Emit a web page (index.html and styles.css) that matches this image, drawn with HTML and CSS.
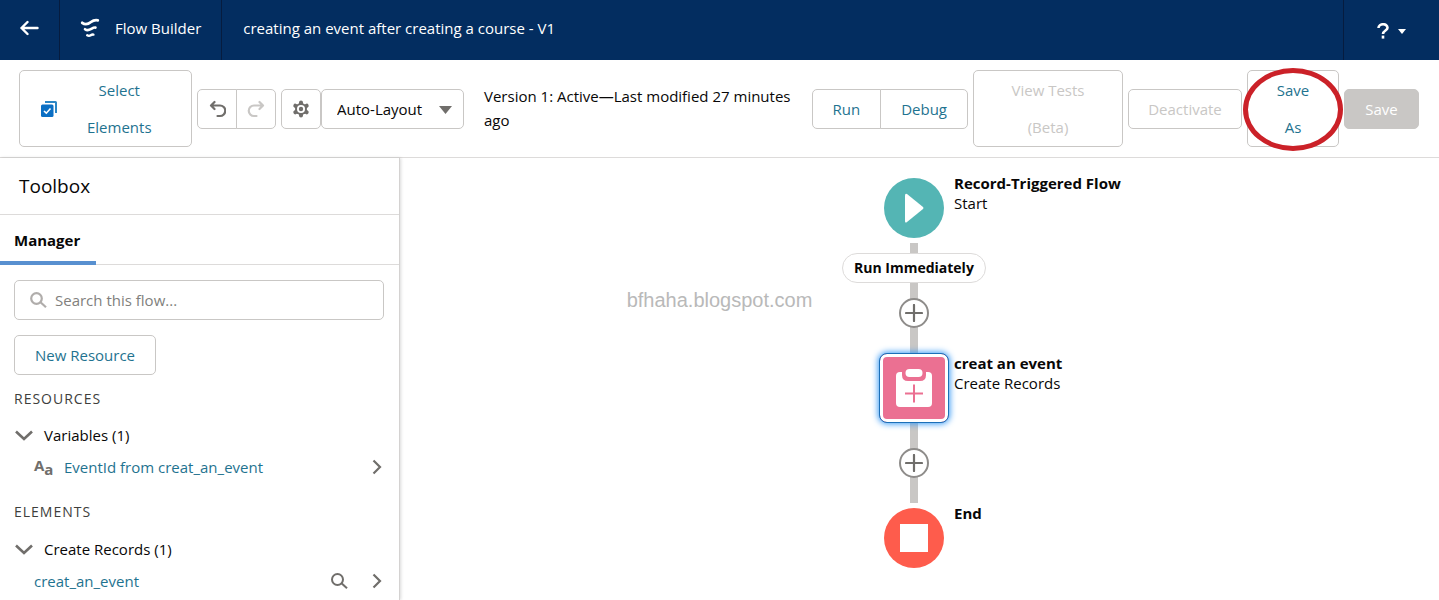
FILE: index.html
```html
<!DOCTYPE html>
<html lang="en">
<head>
<meta charset="utf-8">
<meta name="viewport" content="width=device-width, initial-scale=1">
<title>Flow Builder</title>
<link rel="stylesheet" href="styles.css">
</head>
<body>
<div class="app">
  <header class="topbar">
    <a class="topbar-back" href="#" aria-label="Back">
      <svg width="20" height="16" viewBox="0 0 20 16" fill="none" stroke="#fff" stroke-width="2.400" stroke-linecap="round" stroke-linejoin="round"><path d="M17.500 8h-16M7.500 2l-6 6 6 6"/></svg>
    </a>
    <div class="topbar-brand">
      <svg width="20" height="20" viewBox="0 0 20 20" fill="none" stroke="#fff" stroke-linecap="round"><path stroke-width="2.800" d="M2.200 4.800C5 7 8.500 6 11 4S15 1.800 17.800 2.300"/><path stroke-width="2.600" d="M5 11.200c2 1.500 4 1 5.800 0S13.500 9.300 15.500 9.600"/><path stroke-width="2.400" d="M7.200 17.300c1.400.9 2.600.6 3.500 0s1.500-1 2.700-.7"/></svg>
      <span>Flow Builder</span>
    </div>
    <h1 class="topbar-title">creating an event after creating a course - V1</h1>
    <button class="topbar-help" aria-label="Help">
      <svg width="12" height="16" viewBox="0 0 12 16" fill="none" stroke="#fff" stroke-width="2.600"><path d="M1.500 5C1.500 0 10.500 0 10.500 4.800 10.500 7.500 6 7.500 6 11"/><path d="M6 12.600v3"/></svg>
      <svg width="8" height="5" viewBox="0 0 8 5" fill="#fff"><path d="M0 0h8L4 5z"/></svg>
    </button>
  </header>

  <div class="toolbar">
    <button class="btn btn-select">
      <svg width="16" height="16" viewBox="0 0 16 16"><path d="M4 0h10.500Q16 0 16 1.500V12h-2V2H4z" fill="#2b86c5"/><rect y="3.500" width="12.500" height="12.500" rx="1.500" fill="#0b6fc4"/><path d="m3 10 2.300 2.200L9.500 7.500" fill="none" stroke="#fff" stroke-width="1.600"/></svg>
      <span>Select<br>Elements</span>
    </button>
    <div class="btn-group">
      <button class="btn btn-icon" aria-label="Undo">
        <svg width="18" height="18" viewBox="0 0 18 18" fill="none" stroke="#706e6b" stroke-width="2.200" stroke-linecap="round" stroke-linejoin="round"><path d="M6.500 2 3 5.500 6.500 9M3.500 5.500H12a5 5 0 0 1 0 10.500H9.500"/></svg>
      </button>
      <button class="btn btn-icon" aria-label="Redo" disabled>
        <svg width="18" height="18" viewBox="0 0 18 18" fill="none" stroke="#c9c7c5" stroke-width="2.200" stroke-linecap="round" stroke-linejoin="round"><path d="M12.500 2 16 5.500 12.500 9M15.500 5.500H7a5 5 0 0 0 0 10.500h2.500"/></svg>
      </button>
    </div>
    <div class="mode">
      <button class="btn btn-icon" aria-label="Settings">
        <svg width="18" height="18" viewBox="0 0 18 18"><g stroke="#706e6b" stroke-width="4" stroke-linecap="round"><path d="M9 2.500v13M3.300 5.700l11.400 6.600M14.700 5.700 3.300 12.300"/></g><circle cx="9" cy="9" r="6" fill="#706e6b"/><circle cx="9" cy="9" r="4" fill="#fff"/><circle cx="9" cy="9" r="2.200" fill="#706e6b"/></svg>
      </button>
      <div class="select-wrap">
        <select class="select" aria-label="Layout mode"><option>Auto-Layout</option><option>Freeform</option></select>
        <svg class="select-arrow" width="13" height="8" viewBox="0 0 13 8" fill="#706e6b"><path d="M0 0h13L6.500 8z"/></svg>
      </div>
    </div>
    <p class="version">Version 1: Active—Last modified 27 minutes ago</p>
    <div class="btn-group">
      <button class="btn">Run</button>
      <button class="btn">Debug</button>
    </div>
    <button class="btn btn-tests" disabled>View Tests<br>(Beta)</button>
    <button class="btn btn-deactivate" disabled>Deactivate</button>
    <div class="marked">
      <button class="btn btn-save-as">Save<br>As</button>
      <span class="marker"></span>
    </div>
    <button class="btn btn-save" disabled>Save</button>
  </div>

  <div class="workspace">
    <aside class="sidebar">
      <h2 class="sidebar-title">Toolbox</h2>
      <div class="tabs" role="tablist"><button class="tab" role="tab" aria-selected="true">Manager</button></div>
      <div class="panel">
        <label class="search">
          <svg width="17" height="16" viewBox="0 0 17 16" fill="none" stroke="#b0adab" stroke-width="2.200"><circle cx="6.500" cy="6.500" r="5.300"/><path d="m10.500 10.200 5.500 5"/></svg>
          <input type="search" placeholder="Search this flow..." aria-label="Search this flow">
        </label>
        <button class="btn btn-resource">New Resource</button>

        <h3 class="section">RESOURCES</h3>
        <button class="group">
          <svg width="18" height="11" viewBox="0 0 18 11" fill="none" stroke="#706e6b" stroke-width="2.600"><path d="m1 1.500 8 7.500 8-7.500"/></svg>
          Variables (1)
        </button>
        <div class="item">
          <span class="type-icon" aria-hidden="true"><b>A</b><b class="type-small">a</b></span>
          <a class="item-link" href="#">EventId from creat_an_event</a>
          <svg class="chev" width="10" height="16" viewBox="0 0 10 16" fill="none" stroke="#706e6b" stroke-width="2.200"><path d="m1.500 1.500 6.500 6.500-6.500 6.500"/></svg>
        </div>

        <h3 class="section section-elements">ELEMENTS</h3>
        <button class="group">
          <svg width="18" height="11" viewBox="0 0 18 11" fill="none" stroke="#706e6b" stroke-width="2.600"><path d="m1 1.500 8 7.500 8-7.500"/></svg>
          Create Records (1)
        </button>
        <div class="item">
          <a class="item-link" href="#">creat_an_event</a>
          <svg width="17" height="16" viewBox="0 0 17 16" fill="none" stroke="#706e6b" stroke-width="2"><circle cx="6.500" cy="6.500" r="5.500"/><path d="m10.500 10.200 5.500 5"/></svg>
          <svg class="chev" width="10" height="16" viewBox="0 0 10 16" fill="none" stroke="#706e6b" stroke-width="2.200"><path d="m1.500 1.500 6.500 6.500-6.500 6.500"/></svg>
        </div>
      </div>
    </aside>

    <main class="canvas">
      <div class="connector connector-top"></div>
      <div class="connector connector-bottom"></div>
      <div class="node node-start">
        <svg width="60" height="60" viewBox="0 0 60 60"><circle cx="30" cy="30" r="30" fill="#54b5b4"/><path d="M21 17.500v25.500q0 2.500 2 1L39 31q1-1 0-2L23 16q-2-1-2 1.500z" fill="#fff"/></svg>
        <div class="node-label"><strong>Record-Triggered Flow</strong><span>Start</span></div>
      </div>
      <div class="path-label">Run Immediately</div>
      <button class="add add-first" aria-label="Add element"><svg width="18" height="18" viewBox="0 0 18 18" stroke="#706e6b" stroke-width="2.200" stroke-linecap="round"><path d="M9 1v16M1 9h16"/></svg></button>
      <div class="node node-create">
        <div class="tile"><svg width="36" height="38" viewBox="0 0 36 38"><rect y="3" width="36" height="35" rx="4" fill="#fff"/><path d="M6 2v4q0 6 6 6h12q6 0 6-6V2z" fill="#eb7092"/><rect x="9.500" width="17" height="8" rx="4" fill="#fff"/><path d="M18 15.500v18M9 24.500h18" stroke="#eb7092" stroke-width="2"/></svg></div>
        <div class="node-label"><strong>creat an event</strong><span>Create Records</span></div>
      </div>
      <button class="add add-second" aria-label="Add element"><svg width="18" height="18" viewBox="0 0 18 18" stroke="#706e6b" stroke-width="2.200" stroke-linecap="round"><path d="M9 1v16M1 9h16"/></svg></button>
      <div class="node node-end">
        <svg width="60" height="60" viewBox="0 0 60 60"><circle cx="30" cy="30" r="30" fill="#fe5c4c"/><path d="M16 16h28v28H16z" fill="#fff"/></svg>
        <div class="node-label"><strong>End</strong></div>
      </div>
    </main>
  </div>
  <div class="watermark">bfhaha.blogspot.com</div>
</div>
</body>
</html>
```
FILE: styles.css
```css
* { box-sizing: border-box; }
body {
  margin: 0;
  font-family: "Open Sans", "Noto Sans", sans-serif;
  font-size: 15px;
  line-height: 24px;
  color: #080707;
  background: #fff;
}
button, input, select { font: inherit; color: inherit; }
h1, h2, h3, p { margin: 0; font-weight: inherit; }
b, strong { font-weight: 700; }
svg { display: block; flex: none; }
a { color: #1f7390; text-decoration: none; }

.app { position: relative; display: flex; flex-direction: column; height: 100vh; overflow: hidden; }

.topbar { display: flex; flex: none; height: 60px; background: #032d60; color: #fff; }
.topbar-back, .topbar-brand, .topbar-title { display: flex; align-items: center; padding-bottom: 4px; }
.topbar-back { justify-content: center; width: 60px; border-right: 1px solid #061c3f; }
.topbar-brand { gap: 15px; padding-left: 20px; padding-right: 20px; border-right: 1px solid #061c3f; }
.topbar-title { flex: 1; padding-left: 21px; font-size: 15px; }
.topbar-help {
  display: flex; align-items: center; justify-content: center; gap: 9px;
  width: 96px; padding: 2px 0 0; border: 0; border-left: 1px solid #061c3f; background: none;
}

.toolbar {
  display: flex; flex: none; align-items: center; gap: 5px;
  padding: 10px 20px 10px 19px; border-bottom: 1px solid #dddbda;
}
.btn {
  flex: none; min-height: 40px; padding: 1px 20px 0; border: 1px solid #c9c7c5; border-radius: 5px;
  background: #fff; color: #1f7390; line-height: 37px;
}
.btn:disabled { color: #c9c7c5; }
.btn-select { display: flex; align-items: center; gap: 30px; width: 173px; padding: 1px 21px 0; }
.btn-icon { display: flex; align-items: center; justify-content: center; width: 40px; padding: 0; }
.btn-group { display: flex; flex: none; }
.btn-group .btn:first-child { border-radius: 5px 0 0 5px; }
.btn-group .btn:last-child { margin-left: -1px; border-radius: 0 5px 5px 0; }
.mode { display: flex; flex: none; }
.select-wrap { position: relative; }
.select {
  appearance: none; width: 143px; height: 40px; padding: 0 30px 0 15px;
  border: 1px solid #c9c7c5; border-radius: 5px; background: #fff;
}
.select-arrow { position: absolute; right: 12px; top: 17px; pointer-events: none; }
.version { flex: 1; min-width: 0; padding: 0 0 1px 15px; }
.btn-tests { width: 150px; }
.btn-deactivate { width: 114px; padding-left: 0; padding-right: 0; }
.marked { position: relative; flex: none; display: flex; }
.btn-save-as { width: 92px; }
.marker {
  position: absolute; inset: -2px -4px -4px -4px;
  border: 5px solid #cb2128; border-radius: 50%; pointer-events: none;
}
.btn-save:disabled { width: 75px; border-color: #c9c7c5; background: #c9c7c5; color: #fff; }

.workspace { display: flex; flex: 1; min-height: 0; }
.sidebar {
  flex: none; width: 400px; overflow: hidden;
  border-right: 1px solid #d4d2d1; box-shadow: 1px 0 3px rgba(0, 0, 0, .15);
}
.sidebar-title { padding: 16px 19px; border-bottom: 1px solid #dddbda; font-size: 19px; }
.tabs { display: flex; border-bottom: 1px solid #dddbda; }
.tab {
  height: 50px; margin-bottom: -1px; padding: 3px 16px 0 14px; border: 0; border-bottom: 4px solid #5890d0;
  background: none; font-weight: 700;
}
.panel { display: flex; flex-direction: column; align-items: flex-start; padding: 15px 15px 0 14px; }
.search {
  display: flex; align-items: center; gap: 8px; width: 100%; height: 40px; padding: 0 15px;
  border: 1px solid #c9c7c5; border-radius: 5px;
}
.search input { flex: 1; min-width: 0; padding: 0; border: 0; outline: 0; background: none; }
.search input::placeholder { color: #817f7d; opacity: 1; }
.btn-resource { margin-top: 15px; }
.section { margin-top: 12px; font-size: 14px; letter-spacing: 1px; color: #3e3e3c; }
.section-elements { margin-top: 21px; }
.group {
  display: flex; align-items: center; gap: 11px; margin-top: 12px; padding: 0 1px;
  border: 0; background: none;
}
.section-elements + .group { margin-top: 13px; }
.item { display: flex; align-items: center; width: 100%; min-height: 24px; margin-top: 8px; padding: 0 2px 0 20px; }
.item-link { flex: 1; }
.type-icon { display: flex; width: 30px; color: #706e6b; line-height: 20px; }
.type-small { padding-top: 4px; }
.chev { margin-left: 24px; }

.canvas { position: relative; flex: 1; overflow: hidden; }
.connector { position: absolute; left: 510px; width: 8px; background: #c9c7c5; }
.connector-top { top: 85px; height: 112px; }
.connector-bottom { top: 265px; height: 80px; }
.node { position: absolute; left: 484px; display: flex; gap: 10px; }
.node-start { top: 20px; }
.node-create { left: 479px; top: 195px; gap: 5px; }
.node-end { top: 350px; }
.node-label { display: flex; flex-direction: column; line-height: 20px; white-space: nowrap; margin-top: -5px; }
.node-create .node-label { margin-top: 0; }
.tile {
  display: flex; align-items: center; justify-content: center; width: 70px; height: 70px;
  border: 1px solid #1b6fb8; border-radius: 8px; background: #eb7092;
  box-shadow: inset 0 0 0 3px #fff, 0 0 6px 1px #3a9bf5;
}
.path-label {
  position: absolute; left: 442px; top: 95px; padding: 2px 11px; border: 1px solid #dddbda;
  border-radius: 15px; background: #fff; font-size: 14px; font-weight: 700; white-space: nowrap;
}
.add {
  position: absolute; left: 499px; display: flex; align-items: center; justify-content: center;
  width: 30px; height: 30px; padding: 0; border: 2px solid #8e8c8a; border-radius: 50%; background: #fff;
}
.add-first { top: 140px; }
.add-second { top: 290px; }

.watermark {
  position: absolute; left: 0; right: 0; top: 288px; text-align: center;
  font-family: "Liberation Sans", Arial, sans-serif; font-size: 20px;
  color: #b9b9b9; pointer-events: none;
}
```
